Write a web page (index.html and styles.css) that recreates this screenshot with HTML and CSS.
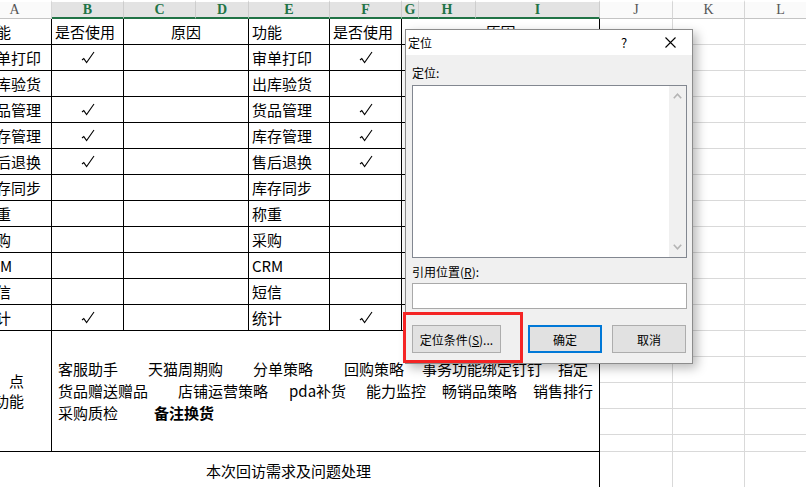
FILE: index.html
```html
<!DOCTYPE html>
<html lang="zh-CN">
<head>
  <meta charset="UTF-8"/>
  <title>定位</title>
  <link rel="stylesheet" href="styles.css">
</head>
<body>

<div class="sheet">
  <!-- column letters -->
  <div class="hd">A</div>
  <div class="hd sel">B</div>
  <div class="hd sel">C</div>
  <div class="hd sel">D</div>
  <div class="hd sel">E</div>
  <div class="hd sel">F</div>
  <div class="hd sel">G</div>
  <div class="hd sel">H</div>
  <div class="hd sel">I</div>
  <div class="hd">J</div>
  <div class="hd">K</div>
  <div class="hd">L</div>

  <!-- title row -->
  <div class="c">功能</div>
  <div class="c">是否使用</div>
  <div class="c span2 mid">原因</div>
  <div class="c">功能</div>
  <div class="c">是否使用</div>
  <div class="c span3 mid">原因</div>
  <div class="g"></div><div class="g"></div><div class="g"></div>

  <div class="c">审单打印</div>
  <div class="c mid"><svg class="tick" viewBox="0 0 14 13"><path d="M1 9 L2.8 7.6 L5.6 11.6 L13 1"/></svg></div>
  <div class="c span2"></div>
  <div class="c">审单打印</div>
  <div class="c mid"><svg class="tick" viewBox="0 0 14 13"><path d="M1 9 L2.8 7.6 L5.6 11.6 L13 1"/></svg></div>
  <div class="c span3"></div>
  <div class="g"></div><div class="g"></div><div class="g"></div>

  <div class="c">出库验货</div>
  <div class="c"></div>
  <div class="c span2"></div>
  <div class="c">出库验货</div>
  <div class="c"></div>
  <div class="c span3"></div>
  <div class="g"></div><div class="g"></div><div class="g"></div>

  <div class="c">货品管理</div>
  <div class="c mid"><svg class="tick" viewBox="0 0 14 13"><path d="M1 9 L2.8 7.6 L5.6 11.6 L13 1"/></svg></div>
  <div class="c span2"></div>
  <div class="c">货品管理</div>
  <div class="c mid"><svg class="tick" viewBox="0 0 14 13"><path d="M1 9 L2.8 7.6 L5.6 11.6 L13 1"/></svg></div>
  <div class="c span3"></div>
  <div class="g"></div><div class="g"></div><div class="g"></div>

  <div class="c">库存管理</div>
  <div class="c mid"><svg class="tick" viewBox="0 0 14 13"><path d="M1 9 L2.8 7.6 L5.6 11.6 L13 1"/></svg></div>
  <div class="c span2"></div>
  <div class="c">库存管理</div>
  <div class="c mid"><svg class="tick" viewBox="0 0 14 13"><path d="M1 9 L2.8 7.6 L5.6 11.6 L13 1"/></svg></div>
  <div class="c span3"></div>
  <div class="g"></div><div class="g"></div><div class="g"></div>

  <div class="c">售后退换</div>
  <div class="c mid"><svg class="tick" viewBox="0 0 14 13"><path d="M1 9 L2.8 7.6 L5.6 11.6 L13 1"/></svg></div>
  <div class="c span2"></div>
  <div class="c">售后退换</div>
  <div class="c mid"><svg class="tick" viewBox="0 0 14 13"><path d="M1 9 L2.8 7.6 L5.6 11.6 L13 1"/></svg></div>
  <div class="c span3"></div>
  <div class="g"></div><div class="g"></div><div class="g"></div>

  <div class="c">库存同步</div>
  <div class="c"></div>
  <div class="c span2"></div>
  <div class="c">库存同步</div>
  <div class="c"></div>
  <div class="c span3"></div>
  <div class="g"></div><div class="g"></div><div class="g"></div>

  <div class="c">称重</div>
  <div class="c"></div>
  <div class="c span2"></div>
  <div class="c">称重</div>
  <div class="c"></div>
  <div class="c span3"></div>
  <div class="g"></div><div class="g"></div><div class="g"></div>

  <div class="c">采购</div>
  <div class="c"></div>
  <div class="c span2"></div>
  <div class="c">采购</div>
  <div class="c"></div>
  <div class="c span3"></div>
  <div class="g"></div><div class="g"></div><div class="g"></div>

  <div class="c">CRM</div>
  <div class="c"></div>
  <div class="c span2"></div>
  <div class="c">CRM</div>
  <div class="c"></div>
  <div class="c span3"></div>
  <div class="g"></div><div class="g"></div><div class="g"></div>

  <div class="c">短信</div>
  <div class="c"></div>
  <div class="c span2"></div>
  <div class="c">短信</div>
  <div class="c"></div>
  <div class="c span3"></div>
  <div class="g"></div><div class="g"></div><div class="g"></div>

  <div class="c">统计</div>
  <div class="c mid"><svg class="tick" viewBox="0 0 14 13"><path d="M1 9 L2.8 7.6 L5.6 11.6 L13 1"/></svg></div>
  <div class="c span2"></div>
  <div class="c">统计</div>
  <div class="c mid"><svg class="tick" viewBox="0 0 14 13"><path d="M1 9 L2.8 7.6 L5.6 11.6 L13 1"/></svg></div>
  <div class="c span3"></div>
  <div class="g"></div><div class="g"></div><div class="g"></div>

  <!-- merged feature block -->
  <div class="c tall side"><span>点</span><span>功能</span></div>
  <div class="c span8 tall feat">
    <div class="ln"><span>客服助手</span><span class="s30">天猫周期购</span><span class="s30">分单策略</span><span class="s31">回购策略</span><span class="s18">事务功能绑定钉钉</span><span class="s16">指定</span></div>
    <div class="ln"><span>货品赠送赠品</span><span class="s30">店铺运营策略</span><span class="s21">pda补货</span><span class="s20">能力监控</span><span class="s16">畅销品策略</span><span class="s16">销售排行</span></div>
    <div class="ln"><span>采购质检</span><b class="s36">备注换货</b></div>
  </div>
  <div class="g"></div><div class="g"></div><div class="g"></div>
  <div class="g"></div><div class="g"></div><div class="g"></div>
  <div class="g"></div><div class="g"></div><div class="g"></div>
  <div class="g"></div><div class="g"></div><div class="g"></div>
  <div class="g"></div><div class="g"></div><div class="g"></div>

  <div class="c span9 mid">本次回访需求及问题处理</div>
  <div class="g"></div><div class="g"></div><div class="g"></div>
</div>

<!-- Go To dialog -->
<div class="dlg">
  <div class="dlg-title">
    <span class="name">定位</span>
    <span class="help">?</span>
    <span class="close"><svg width="11" height="11" viewBox="0 0 11 11"><path d="M0.5 0.5 L10.5 10.5 M10.5 0.5 L0.5 10.5"/></svg></span>
  </div>
  <div class="dlg-body">
    <div class="lbl first">定位:</div>
    <div class="list">
      <div class="list-area"></div>
      <div class="scroll">
        <svg width="9" height="6" viewBox="0 0 9 6"><path d="M0.8 5.2 L4.5 1.2 L8.2 5.2"/></svg>
        <svg width="9" height="6" viewBox="0 0 9 6"><path d="M0.8 0.8 L4.5 4.8 L8.2 0.8"/></svg>
      </div>
    </div>
    <div class="lbl">引用位置(<u>R</u>):</div>
    <div class="ref"></div>
    <div class="btns">
      <div class="btn wide">定位条件(<u>S</u>)...</div>
      <div class="btn ok">确定</div>
      <div class="btn">取消</div>
    </div>
  </div>
</div>

<div class="mark"></div>

</body>
</html>
```

FILE: styles.css
```css
body {
  margin: 0;
  width: 806px; height: 487px;
  overflow: hidden;
  position: relative;
  background: #fff;
  font-family: "Noto Sans CJK SC", "Noto Sans", sans-serif;
  color: #000;
}

/* worksheet */
.sheet {
  display: grid;
  grid-template-columns: 74px 72px 72px 53px 81px 72px 17px 57px 124px 73px 72px 72px;
  grid-template-rows: 19px repeat(16, 26px) 17px 38px;
  margin-left: -22px;
  font-size: 15px;
}
.hd {
  box-sizing: border-box;
  border-top: 2px solid #fff;
  border-right: 1px solid #d6d6d6;
  border-bottom: 1px solid #c4c4c4;
  background: #fafafa;
  font-family: "Liberation Serif", "DejaVu Serif", serif;
  font-size: 14px; line-height: 16px;
  color: #555; text-align: center;
}
.hd.sel {
  background: #e3e3e3;
  color: #217346; font-weight: bold;
  border-bottom: 2px solid #217346;
  border-right-color: #cdcdcd;
  line-height: 15px;
}
.c {
  box-sizing: border-box;
  border-right: 1px solid #000;
  border-bottom: 1px solid #000;
  display: flex; align-items: center;
  padding-left: 3px;
  white-space: nowrap; overflow: hidden;
  line-height: 20px;
}
.g {
  box-sizing: border-box;
  border-right: 1px solid #d9d9d9;
  border-bottom: 1px solid #d9d9d9;
}
.mid { justify-content: center; padding-left: 0; }
.span2 { grid-column: span 2; }
.span3 { grid-column: span 3; }
.span8 { grid-column: span 8; }
.span9 { grid-column: span 9; }
.tall { grid-row: span 5; }

.tick { width: 14px; height: 13px; }
.tick path { fill: none; stroke: #000; stroke-width: 1.1; }

.side {
  flex-direction: column; justify-content: center; align-items: flex-end;
  padding: 0 27px 0 0;
}
.feat {
  flex-direction: column; justify-content: center; align-items: stretch;
  padding: 0 4px 0 6px;
  line-height: 22px;
}
.ln { display: flex; }
.s16 { margin-left: 16px; }
.s18 { margin-left: 18px; }
.s20 { margin-left: 20px; }
.s21 { margin-left: 21px; }
.s30 { margin-left: 30px; }
.s31 { margin-left: 31px; }
.s36 { margin-left: 36px; }

/* dialog */
.dlg {
  position: absolute; left: 405px; top: 29px;
  width: 288px; height: 335px;
  box-sizing: border-box;
  border: 1px solid #8c8c8c;
  background: #f0f0f0;
  box-shadow: 4px 4px 10px rgba(0,0,0,0.28);
  font-size: 12px;
  display: flex; flex-direction: column;
}
.dlg-title {
  height: 25px; background: #fff;
  display: flex; align-items: center;
  padding: 0 7px 0 2px;
  line-height: 16px;
}
.dlg-title .name { flex: 1; }
.help { width: 12px; text-align: center; margin-right: 25px; font-size: 13px; }
.close { width: 30px; display: flex; justify-content: center; }
.close path { stroke: #000; stroke-width: 1.1; }
.dlg-body { flex: 1; padding: 0 5px 0 6px; }
.lbl { height: 16px; line-height: 16px; margin-top: 6px; }
.lbl.first { margin-top: 10px; }
.list {
  margin-top: 4px; height: 173px;
  box-sizing: border-box;
  border: 1px solid #828790;
  display: flex;
}
.list-area { flex: 1; background: #fff; }
.scroll {
  width: 17px; background: #f0f0f0;
  display: flex; flex-direction: column; justify-content: space-between; align-items: center;
  padding: 7px 0;
}
.scroll path { fill: none; stroke: #b4b4b4; stroke-width: 1.6; }
.ref {
  margin-top: 3px; height: 26px;
  box-sizing: border-box;
  border: 1px solid #a9a9a9; background: #fff;
}
.btns { display: flex; margin-top: 16px; }
.btn {
  width: 74px; height: 28px;
  box-sizing: border-box;
  border: 1px solid #adadad; background: #e1e1e1;
  display: flex; align-items: center; justify-content: center;
  margin-left: 10px;
}
.btn.wide { width: 89px; margin-left: 0; }
.btn.ok { border: 2px solid #0078d7; margin-left: 27px; }

/* red highlight drawn over the dialog */
.mark {
  position: absolute; left: 403px; top: 312px;
  width: 120px; height: 51px;
  box-sizing: border-box;
  border: 3px solid #f42424;
}
```
